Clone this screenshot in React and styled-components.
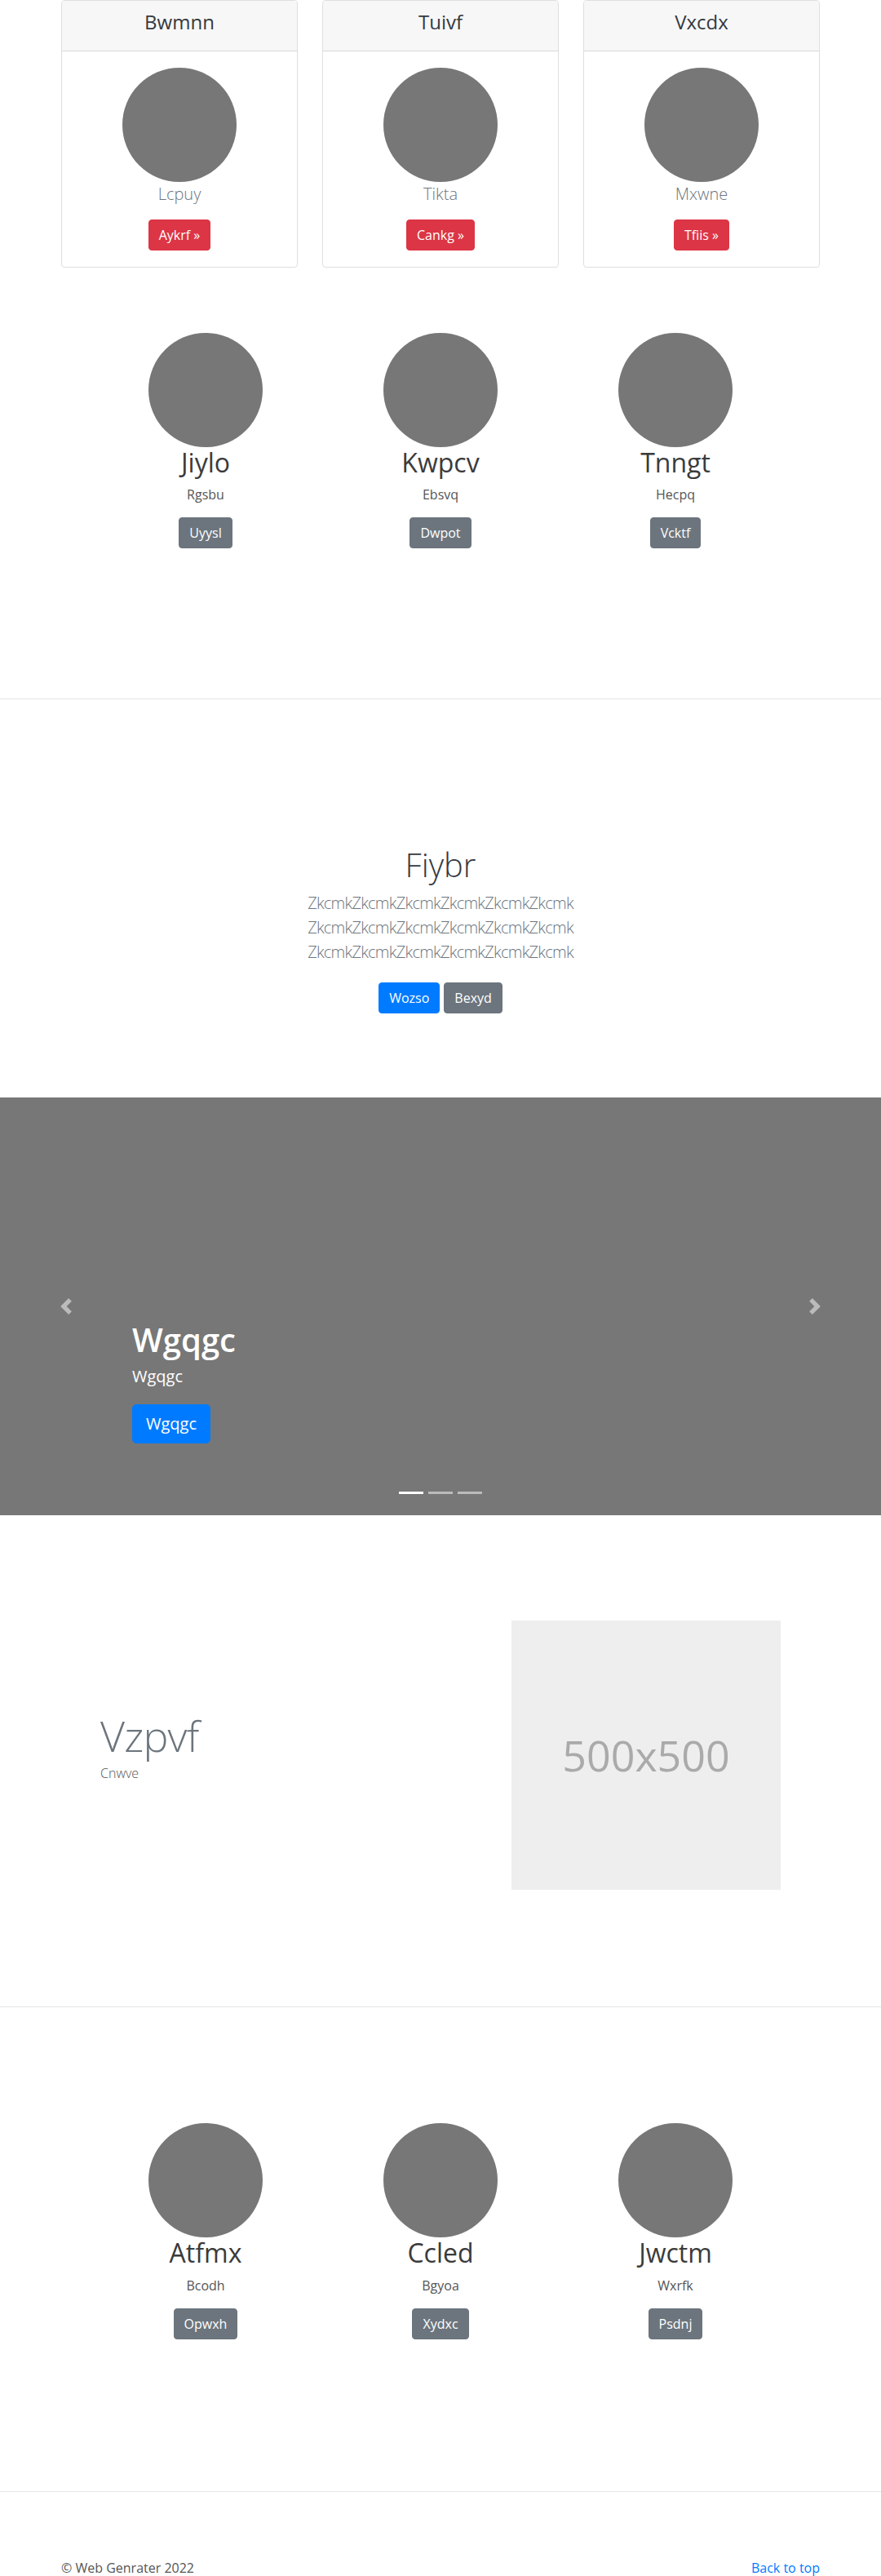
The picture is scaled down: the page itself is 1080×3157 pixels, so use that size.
import React from "react";
import styled, { createGlobalStyle, css } from "styled-components";

const GlobalStyle = createGlobalStyle`
  * { box-sizing: border-box; }
  html, body { margin: 0; padding: 0; }
  body {
    font-family: "Segoe UI", "Open Sans", "Noto Sans", sans-serif;
    font-size: 16px;
    line-height: 1.5;
    color: #212529;
    background: #fff;
  }
`;

const Container = styled.div`
  width: ${(p) => p.$width || 960}px;
  margin: 0 auto;
  padding: 0 ${(p) => (p.$flush ? 0 : 15)}px;
`;

const CardDeck = styled.div`
  display: flex;
  gap: 30px;
`;

const Card = styled.div`
  flex: 1;
  border: 1px solid rgba(0, 0, 0, 0.125);
  border-radius: 4px;
  text-align: center;
  overflow: hidden;
`;

const CardHeader = styled.div`
  background: #f7f7f7;
  border-bottom: 1px solid rgba(0, 0, 0, 0.125);
  padding: 12px 20px;
`;

const CardTitle = styled.h4`
  margin: 0 0 8px;
  font-size: 24px;
  line-height: 1.2;
  font-weight: 500;
  color: #343a40;
`;

const CardBody = styled.div`
  padding: 20px;
`;

const Avatar = styled.div`
  width: 140px;
  height: 140px;
  border-radius: 50%;
  background: #777;
  margin: 0 auto;
`;

const Lead = styled.p`
  margin: 0 0 16px;
  font-size: 20px;
  line-height: 30px;
  font-weight: 300;
  color: #6c757d;
`;

const variants = {
  primary: "#007bff",
  secondary: "#6c757d",
  danger: "#dc3545",
};

const Button = styled.a`
  display: inline-block;
  background: ${(p) => variants[p.$variant]};
  color: #fff;
  border: 1px solid ${(p) => variants[p.$variant]};
  border-radius: ${(p) => (p.$large ? 5 : 4)}px;
  text-decoration: none;
  font-weight: 400;
  white-space: nowrap;
  ${(p) =>
    p.$large
      ? css`
          padding: 8px 16px;
          font-size: 20px;
          line-height: 30px;
        `
      : css`
          padding: 6px 12px;
          font-size: 16px;
          line-height: 24px;
        `}
`;

const PricingSection = styled.section``;

const MarketingSection = styled.section`
  padding: ${(p) => p.$top}px 0 ${(p) => p.$bottom}px;
`;

const MarketingRow = styled.div`
  display: grid;
  grid-template-columns: repeat(3, 1fr);
`;

const MarketingCol = styled.div`
  text-align: center;
`;

const Name = styled.h2`
  margin: 0 0 8px;
  font-size: 32px;
  line-height: 1.2;
  font-weight: 400;
  color: #3b3b3b;
`;

const Role = styled.p`
  margin: 0 0 16px;
  font-size: 16px;
  line-height: 24px;
  color: #555;
`;

const Divider = styled.hr`
  margin: 0;
  border: 0;
  border-top: 1px solid #e5e5e5;
`;

const Jumbotron = styled.section`
  padding: 179px 0 103px;
  text-align: center;
`;

const JumboTitle = styled.h1`
  margin: 0 0 8px;
  font-size: 40px;
  line-height: 48px;
  font-weight: 300;
  color: #343a40;
`;

const JumboText = styled.p`
  margin: 0;
  font-size: 20px;
  line-height: 30px;
  font-weight: 300;
  letter-spacing: -0.75px;
  color: #6c757d;
`;

const ButtonRow = styled.div`
  display: flex;
  justify-content: center;
  gap: 5px;
  margin-top: 22px;
`;

const Carousel = styled.section`
  position: relative;
  height: 512px;
  background: #777;
  overflow: hidden;
`;

const Control = styled.a`
  position: absolute;
  top: 0;
  bottom: 0;
  ${(p) => (p.$side === "left" ? "left: 0;" : "right: 0;")}
  width: 15%;
  display: flex;
  align-items: center;
  justify-content: center;
  opacity: 0.5;
`;

const Caption = styled.div`
  position: absolute;
  left: 15%;
  right: 15%;
  bottom: 48px;
  padding: 20px 0;
  color: #fff;
  text-align: left;
`;

const CaptionTitle = styled.h1`
  margin: 0 0 6px;
  font-size: 40px;
  line-height: 1.2;
  font-weight: 600;
`;

const CaptionText = styled.p`
  margin: 0 0 19px;
  font-size: 20px;
  line-height: 30px;
`;

const CaptionAction = styled.div`
  margin-bottom: 20px;
`;

const Indicators = styled.ol`
  position: absolute;
  left: 0;
  right: 0;
  bottom: 26px;
  margin: 0;
  padding: 0;
  list-style: none;
  display: flex;
  justify-content: center;
  gap: 6px;
`;

const Indicator = styled.li`
  width: 30px;
  height: 3px;
  background: #fff;
  opacity: ${(p) => (p.$active ? 1 : 0.5)};
`;

const FeaturetteSection = styled.section`
  padding: 129px 0 143px;
`;

const FeaturetteRow = styled.div`
  display: grid;
  grid-template-columns: 7fr 5fr;
  align-items: center;
`;

const FeatureCol = styled.div`
  padding: 0 15px;
`;

const FeatureHeading = styled.h2`
  margin: 0 0 8px;
  font-size: 52px;
  line-height: 1;
  font-weight: 300;
  letter-spacing: -0.8px;
  color: #6c757d;
`;

const FeatureSub = styled.p`
  margin: 0 0 16px;
  font-size: 16px;
  line-height: 24px;
  font-weight: 300;
  color: #555;
`;

const Placeholder = styled.div`
  width: 330px;
  height: 330px;
  background: #eee;
  color: #aaa;
  font-size: 52px;
  display: flex;
  align-items: center;
  justify-content: center;
`;

const Footer = styled.footer`
  padding-top: 81px;
`;

const FooterRow = styled.div`
  display: flex;
  justify-content: space-between;
  font-size: 16px;
  line-height: 24px;
`;

const FooterText = styled.p`
  margin: 0;
  color: #555;
`;

const FooterLink = styled.a`
  color: #007bff;
  text-decoration: none;
`;

const Chevron = ({ dir }) => (
  <svg width="20" height="20" viewBox="0 0 8 8" fill="#fff">
    {dir === "left" ? (
      <path d="M5.25 0l-4 4 4 4 1.5-1.5L4.25 4l2.5-2.5L5.25 0z" />
    ) : (
      <path d="M2.75 0l-1.5 1.5L3.75 4l-2.5 2.5L2.75 8l4-4-4-4z" />
    )}
  </svg>
);

const pricing = [
  { title: "Bwmnn", text: "Lcpuy", btn: "Aykrf" },
  { title: "Tuivf", text: "Tikta", btn: "Cankg" },
  { title: "Vxcdx", text: "Mxwne", btn: "Tfiis" },
];

const team1 = [
  { name: "Jiylo", role: "Rgsbu", btn: "Uyysl" },
  { name: "Kwpcv", role: "Ebsvq", btn: "Dwpot" },
  { name: "Tnngt", role: "Hecpq", btn: "Vcktf" },
];

const team2 = [
  { name: "Atfmx", role: "Bcodh", btn: "Opwxh" },
  { name: "Ccled", role: "Bgyoa", btn: "Xydxc" },
  { name: "Jwctm", role: "Wxrfk", btn: "Psdnj" },
];

const Team = ({ items, top, bottom }) => (
  <MarketingSection $top={top} $bottom={bottom}>
    <Container $width={864} $flush>
      <MarketingRow>
        {items.map((m) => (
          <MarketingCol key={m.name}>
            <Avatar />
            <Name>{m.name}</Name>
            <Role>{m.role}</Role>
            <Button $variant="secondary" href="#">
              {m.btn}
            </Button>
          </MarketingCol>
        ))}
      </MarketingRow>
    </Container>
  </MarketingSection>
);

const line = "ZkcmkZkcmkZkcmkZkcmkZkcmkZkcmk";

export default function App() {
  return (
    <>
      <GlobalStyle />
      <PricingSection>
        <Container>
          <CardDeck>
            {pricing.map((c) => (
              <Card key={c.title}>
                <CardHeader>
                  <CardTitle>{c.title}</CardTitle>
                </CardHeader>
                <CardBody>
                  <Avatar />
                  <Lead>{c.text}</Lead>
                  <Button $variant="danger" href="#">
                    {c.btn} »
                  </Button>
                </CardBody>
              </Card>
            ))}
          </CardDeck>
        </Container>
      </PricingSection>

      <Team items={team1} top={80} bottom={184} />
      <Divider />

      <Jumbotron>
        <Container>
          <JumboTitle>Fiybr</JumboTitle>
          <JumboText>
            {line}
            <br />
            {line}
            <br />
            {line}
          </JumboText>
          <ButtonRow>
            <Button $variant="primary" href="#">
              Wozso
            </Button>
            <Button $variant="secondary" href="#">
              Bexyd
            </Button>
          </ButtonRow>
        </Container>
      </Jumbotron>

      <Carousel>
        <Control $side="left" href="#">
          <Chevron dir="left" />
        </Control>
        <Control $side="right" href="#">
          <Chevron dir="right" />
        </Control>
        <Caption>
          <CaptionTitle>Wgqgc</CaptionTitle>
          <CaptionText>Wgqgc</CaptionText>
          <CaptionAction>
            <Button $variant="primary" $large href="#">
              Wgqgc
            </Button>
          </CaptionAction>
        </Caption>
        <Indicators>
          <Indicator $active />
          <Indicator />
          <Indicator />
        </Indicators>
      </Carousel>

      <FeaturetteSection>
        <Container $width={864} $flush>
          <FeaturetteRow>
            <FeatureCol>
              <FeatureHeading>Vzpvf</FeatureHeading>
              <FeatureSub>Cnwve</FeatureSub>
            </FeatureCol>
            <FeatureCol>
              <Placeholder>500x500</Placeholder>
            </FeatureCol>
          </FeaturetteRow>
        </Container>
      </FeaturetteSection>
      <Divider />

      <Team items={team2} top={142} bottom={186} />
      <Divider />

      <Footer>
        <Container>
          <FooterRow>
            <FooterText>© Web Genrater 2022</FooterText>
            <FooterLink href="#">Back to top</FooterLink>
          </FooterRow>
        </Container>
      </Footer>
    </>
  );
}
